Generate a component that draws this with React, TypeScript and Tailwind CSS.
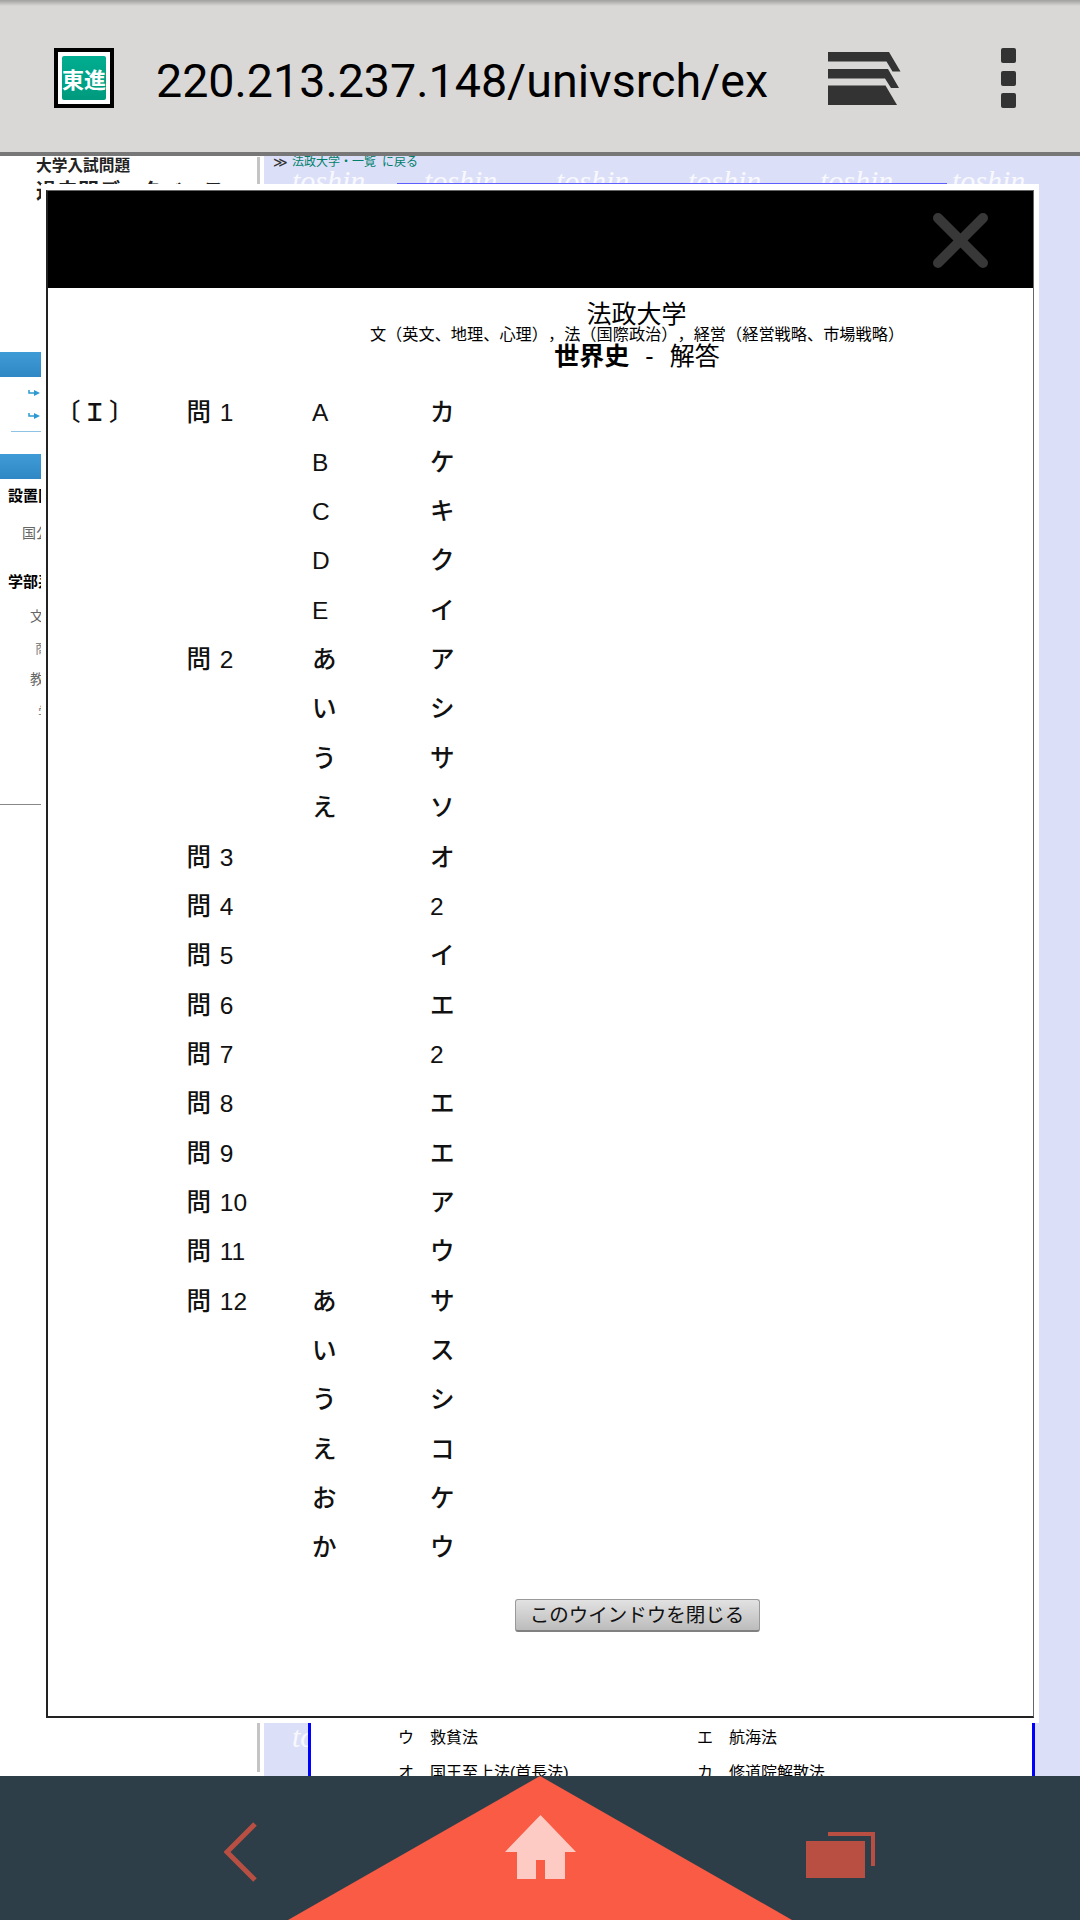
import React from "react";

const JP = "font-['Liberation_Sans','Noto_Sans_CJK_JP',sans-serif]";

// answer rows of the modal table: [section, question, sub, answer]
const rows: [string, string, string, string][] = [
  ["〔Ｉ〕", "問 1", "A", "カ"],
  ["", "", "B", "ケ"],
  ["", "", "C", "キ"],
  ["", "", "D", "ク"],
  ["", "", "E", "イ"],
  ["", "問 2", "あ", "ア"],
  ["", "", "い", "シ"],
  ["", "", "う", "サ"],
  ["", "", "え", "ソ"],
  ["", "問 3", "", "オ"],
  ["", "問 4", "", "2"],
  ["", "問 5", "", "イ"],
  ["", "問 6", "", "エ"],
  ["", "問 7", "", "2"],
  ["", "問 8", "", "エ"],
  ["", "問 9", "", "エ"],
  ["", "問 10", "", "ア"],
  ["", "問 11", "", "ウ"],
  ["", "問 12", "あ", "サ"],
  ["", "", "い", "ス"],
  ["", "", "う", "シ"],
  ["", "", "え", "コ"],
  ["", "", "お", "ケ"],
  ["", "", "か", "ウ"],
];

const ArrowMark = () => (
  <svg width="13" height="6" viewBox="0 0 13 6" className="block">
    <path d="M1 0v3h6" fill="none" stroke="#2e9ad0" strokeWidth="1.5" />
    <path d="M6 0l6 3-6 3z" fill="#2e9ad0" />
  </svg>
);

const TopBar = () => (
  <div className="relative h-[156px] shrink-0 bg-[#d9d8d6] border-b-4 border-[#777777] flex items-start">
    {/* soft shadow under the status bar */}
    <div className="absolute top-0 left-0 right-0 h-[6px] bg-gradient-to-b from-[#a0a09e] to-[#d9d8d6]"></div>
    <div className="ml-[54px] mt-[48px] w-[60px] h-[60px] border-4 border-black bg-white p-1 shrink-0">
      <div className="w-full h-full rounded-[2px] bg-gradient-to-b from-[#00ad90] to-[#009a7e] flex items-center justify-center text-white font-bold text-[22px] leading-none whitespace-nowrap font-['Noto_Sans_CJK_JP',sans-serif]">
        東進
      </div>
    </div>
    <div className="ml-[42px] mt-[50px] w-[612px] h-[62px] overflow-hidden whitespace-nowrap text-black text-[46.600px] leading-[62px] font-['Roboto',sans-serif]">
      220.213.237.148/univsrch/exam/
    </div>
    <svg width="73" height="54" viewBox="0 0 73 54" className="ml-[60px] mt-[52px] shrink-0" fill="#333333">
      <path d="M0 0h61l11.500 19.500h-8l-6-10h-58.500z" />
      <path d="M0 17h60l11 19h-8l-6-9.500h-57z" />
      <path d="M0 33.500h57.500l11.500 19.500h-69z" />
    </svg>
    <div className="ml-[100px] mt-[48px] w-[15px] flex flex-col gap-[7.500px] shrink-0">
      <div className="h-[15px] rounded-[2px] bg-[#333333]"></div>
      <div className="h-[15px] rounded-[2px] bg-[#333333]"></div>
      <div className="h-[15px] rounded-[2px] bg-[#333333]"></div>
    </div>
  </div>
);

const LeftColumn = () => (
  <div className={`w-[257px] shrink-0 bg-white overflow-hidden ${JP}`}>
    <div className="ml-[36px] text-[15.700px] leading-[20px] font-bold text-[#222222] whitespace-nowrap">大学入試問題</div>
    <div className="ml-[36px] mt-[1px] text-[21px] leading-[28px] font-bold text-[#222222] whitespace-nowrap">過去問データベース</div>
    <div className="mt-[147px] h-[25px] w-[41px] bg-gradient-to-b from-[#3f9bd6] to-[#2f88c4]"></div>
    <div className="mt-[13px] ml-[28px]"><ArrowMark /></div>
    <div className="mt-[17px] ml-[28px]"><ArrowMark /></div>
    <div className="mt-[12px] ml-[11px] w-[30px] h-[1px] bg-[#8fc3e5]"></div>
    <div className="mt-[22px] h-[25px] w-[41px] bg-gradient-to-b from-[#3f9bd6] to-[#2f88c4]"></div>
    <div className="mt-[7px] ml-[8px] text-[15px] leading-[20px] font-bold text-black whitespace-nowrap">設置区分</div>
    <div className="mt-[17px] ml-[22px] text-[14px] leading-[20px] text-[#666666] whitespace-nowrap">国公私立</div>
    <div className="mt-[29px] ml-[8px] text-[15px] leading-[20px] font-bold text-black whitespace-nowrap">学部系統</div>
    <div className="mt-[14px] ml-[30px] text-[14px] leading-[20px] text-[#666666] whitespace-nowrap">文学部</div>
    <div className="mt-[12px] ml-[35px] text-[14px] leading-[20px] text-[#888888] whitespace-nowrap">商学部</div>
    <div className="mt-[11px] ml-[30px] text-[14px] leading-[20px] text-[#666666] whitespace-nowrap">教育学部</div>
    <div className="mt-[13px] ml-[38px] text-[14px] leading-[20px] text-[#888888] whitespace-nowrap">学部</div>
    <div className="mt-[82px] h-[1px] w-[41px] bg-[#888888]"></div>
  </div>
);

const toshinRow = ["a", "b", "c", "d", "e", "f"];

const MainColumn = () => (
  <div className={`relative flex-1 bg-[#dcdff8] overflow-hidden flex flex-col ${JP}`}>
    {/* watermark repeated over the lavender page background */}
    <div className="absolute top-[8px] left-[28px] flex gap-[60px] text-[30px] leading-[34px] italic text-white/80 font-['Liberation_Serif',serif]">
      {toshinRow.map((k) => (
        <span key={k} className="w-[72px]">toshin</span>
      ))}
    </div>
    <div className="absolute top-[1564px] left-[28px] text-[30px] leading-[34px] italic text-white/80 font-['Liberation_Serif',serif]">toshin</div>

    <div className="h-[27px] shrink-0 flex items-start pl-[9px] text-[12px] leading-[13px] whitespace-nowrap">
      <span className="text-[#333333] w-[19px] text-[14px] font-['DejaVu_Sans',sans-serif]">≫</span>
      <span className="text-[#00806a]">法政大学・一覧</span>
      <span className="text-[#00806a] ml-[6px]">に戻る</span>
    </div>
    <div className="relative h-[2px] shrink-0 ml-[133px] w-[550px] bg-[#5f5fff]"></div>
    <div className="relative flex-1 ml-[44px] w-[727px] bg-white border-x-[3px] border-[#0000ff] overflow-hidden flex flex-col justify-end pb-0">
      <div className="-mb-[13px] text-[16px] leading-[32px] text-black">
        <div className="grid grid-cols-[299px_1fr] pl-[87px]">
          <div className="flex"><span className="w-[32px]">ウ</span><span>救貧法</span></div>
          <div className="flex"><span className="w-[32px]">エ</span><span>航海法</span></div>
        </div>
        <div className="mt-[3px] grid grid-cols-[299px_1fr] pl-[87px]">
          <div className="flex"><span className="w-[32px]">オ</span><span>国王至上法(首長法)</span></div>
          <div className="flex"><span className="w-[32px]">カ</span><span>修道院解散法</span></div>
        </div>
      </div>
    </div>
  </div>
);

const Modal = () => (
  <div className={`absolute left-[41px] top-[184px] w-[998px] h-[1539px] bg-white px-[5px] pt-[6px] pb-[5px] ${JP}`}>
    <div className="h-full flex flex-col bg-white border-l-2 border-b-2 border-r border-t border-l-[#222222] border-b-[#222222] border-r-[#666666] border-t-[#666666]">
      <div className="h-[97px] shrink-0 bg-black flex items-start justify-end">
        <svg width="55" height="55" viewBox="0 0 55 55" className="mt-[22px] mr-[45px]">
          <path d="M5 5L50 50M50 5L5 50" stroke="#383838" strokeWidth="10" strokeLinecap="round" fill="none" />
        </svg>
      </div>
      <div className="pt-[16px] pl-[8px] text-black [text-spacing-trim:space-all]">
        <div className="text-center w-[1161px] text-[25px] leading-[20px]">法政大学</div>
        <div className="text-center w-[1162px] text-[16.200px] leading-[21px]">文（英文、地理、心理），法（国際政治），経営（経営戦略、市場戦略）</div>
        <div className="text-center w-[1162px] text-[25px] leading-[22px]"><b>世界史</b><span className="ml-[16px] mr-[16px]">-</span>解答</div>
        <div className="mt-[22px] flex flex-col">
          {rows.map(([section, question, sub, answer], i) => (
            <div key={i} className="h-[49.350px] grid grid-cols-[130.500px_125.500px_118px_1fr] items-center text-[24.500px] leading-none font-medium text-[#111111] [word-spacing:2px]">
              <span className="tracking-[2px]">{section}</span>
              <span>{question}</span>
              <span>{sub}</span>
              <span>{answer}</span>
            </div>
          ))}
        </div>
        <div className="mt-[26px] w-[1162px] flex justify-center">
          <button className="w-[245px] h-[33px] rounded-[3px] border border-[#999999] border-b-2 border-b-[#808080] bg-gradient-to-b from-[#e2e2e2] to-[#bcbcbc] text-[19.500px] leading-none text-[#111111] whitespace-nowrap">
            このウインドウを閉じる
          </button>
        </div>
      </div>
    </div>
  </div>
);

const BottomNav = () => (
  <div className="relative h-[144px] shrink-0 bg-[#2d3e49] flex items-start pl-[224px] overflow-hidden">
    <svg width="504" height="144" viewBox="0 0 504 144" className="absolute left-[288px] top-0">
      <path d="M252 0L504 144H0z" fill="#f95b44" />
    </svg>
    <svg width="34" height="60" viewBox="0 0 34 60" className="relative mt-[46px] shrink-0">
      <path d="M31 2L3 30L31 58" fill="none" stroke="#b84f42" strokeWidth="5" />
    </svg>
    <svg width="71" height="65" viewBox="0 0 71 65" className="relative ml-[247px] mt-[39px] shrink-0">
      <path d="M35.500 0L71 37H60V64H40V45H31V64H12V37H0z" fill="#fdcbc4" />
    </svg>
    <svg width="69" height="46" viewBox="0 0 69 46" className="relative ml-[230px] mt-[56px] shrink-0" fill="#b84f42">
      <path d="M22 0H69V34H65V4H22z" />
      <path d="M0 9H59V46H0z" />
    </svg>
  </div>
);

export default function App() {
  return (
    <div className="relative w-[1080px] h-[1920px] overflow-hidden flex flex-col bg-white">
      <TopBar />
      <div className="flex-1 flex min-h-0">
        <LeftColumn />
        <div className="w-[3px] shrink-0 bg-[#c4c4c4] mt-[1px] mb-[4px]"></div>
        <div className="w-[4px] shrink-0 bg-white"></div>
        <MainColumn />
      </div>
      <BottomNav />
      <Modal />
    </div>
  );
}
